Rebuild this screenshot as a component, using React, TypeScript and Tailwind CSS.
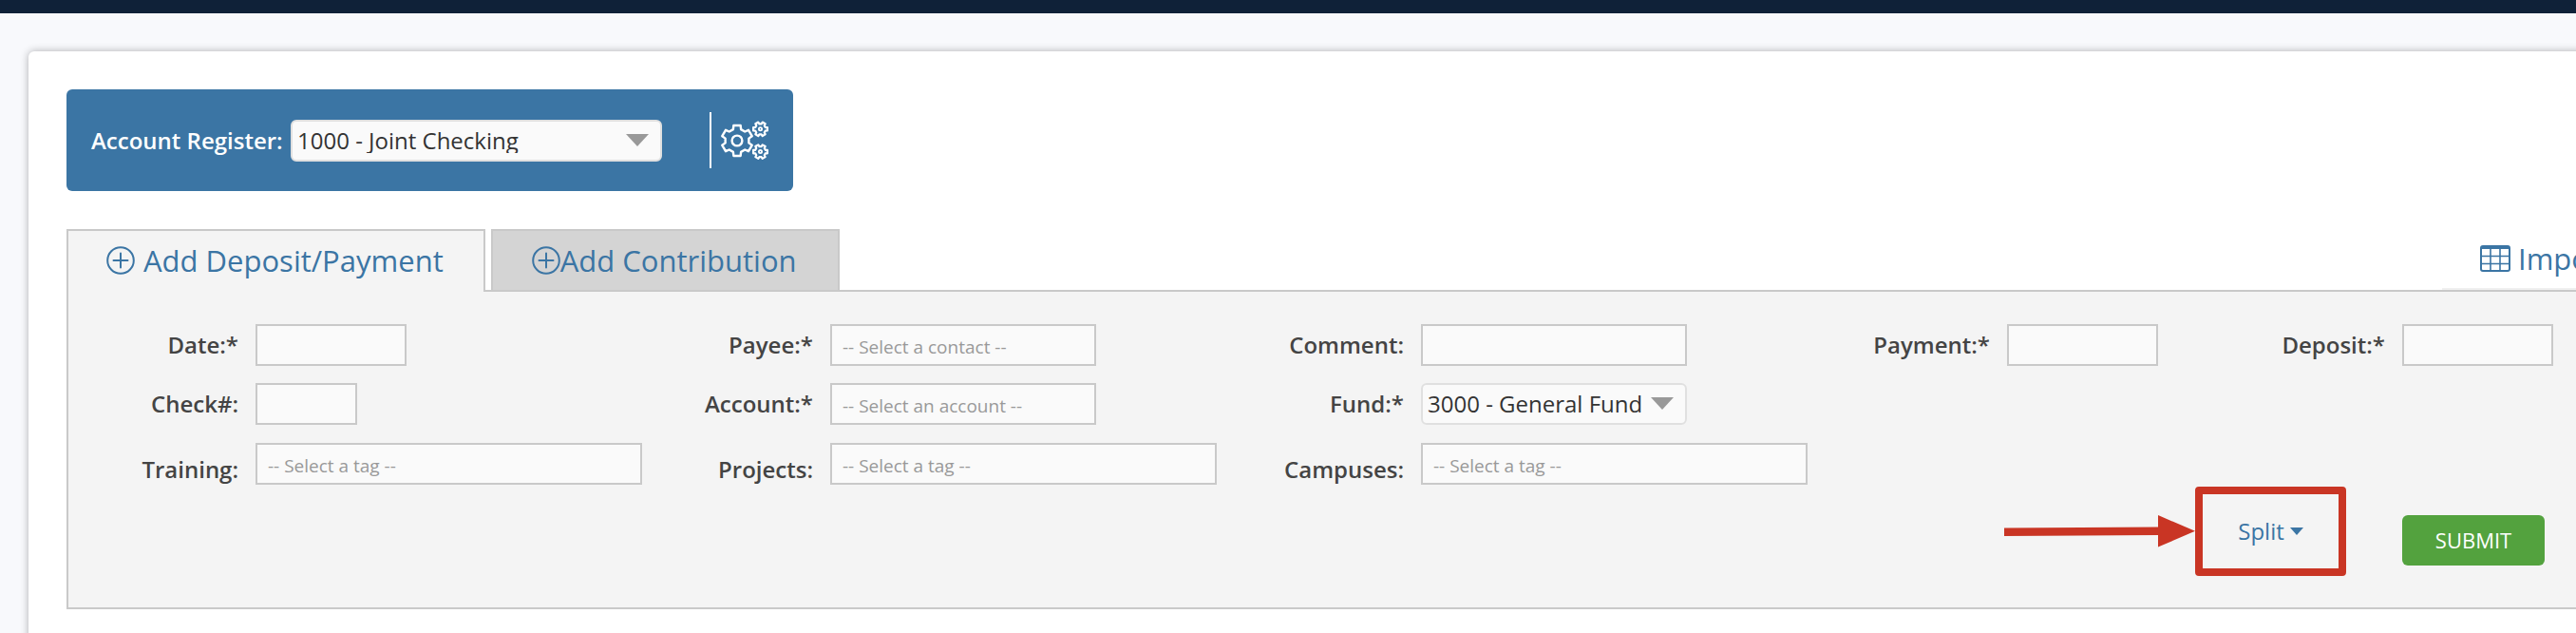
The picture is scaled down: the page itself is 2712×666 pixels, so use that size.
import { useId } from "react";
import type { ReactNode } from "react";

/** Closed outline of a six-toothed cog, with rounded joins left to the stroke. */
function cogPath(cx: number, cy: number, outer: number, root: number, start: number): string {
  const points: string[] = [];
  for (let i = 0; i < 6; i += 1) {
    const mid = start + i * 60;
    const corners: [number, number][] = [
      [-19, root],
      [-13, outer],
      [13, outer],
      [19, root],
    ];
    for (const [offset, radius] of corners) {
      const a = ((mid + offset) * Math.PI) / 180;
      points.push(`${(cx + radius * Math.cos(a)).toFixed(2)} ${(cy + radius * Math.sin(a)).toFixed(2)}`);
    }
  }
  return `M${points.join("L")}Z`;
}

function CogsIcon() {
  return (
    <svg width="52" height="42" viewBox="0 0 52 42" fill="none" stroke="currentColor" strokeWidth="2.4" strokeLinejoin="round" aria-hidden="true">
      <path d={cogPath(18, 21, 16.4, 12.6, -90)} />
      <circle cx="18" cy="21" r="5.4" />
      <path d={cogPath(42.5, 8.8, 7.6, 5.6, 0)} strokeWidth="2.2" />
      <circle cx="42.5" cy="8.8" r="1.6" strokeWidth="1.8" />
      <path d={cogPath(42.5, 32.6, 7.6, 5.6, 0)} strokeWidth="2.2" />
      <circle cx="42.5" cy="32.6" r="1.6" strokeWidth="1.8" />
    </svg>
  );
}

function PlusCircleIcon() {
  return (
    <svg width="30" height="30" viewBox="0 0 30 30" fill="none" stroke="currentColor" strokeWidth="2" className="shrink-0" aria-hidden="true">
      <circle cx="15" cy="15" r="13.8" />
      <path d="M15 7.5v15M7.5 15h15" strokeLinecap="round" />
    </svg>
  );
}

function TableIcon() {
  return (
    <svg width="32" height="28" viewBox="0 0 32 28" fill="none" stroke="currentColor" className="shrink-0" aria-hidden="true">
      <rect x="1" y="1" width="30" height="26" rx="2" strokeWidth="2" />
      <path d="M1 2.5h30" strokeWidth="3" />
      <path d="M11 3v24M21 3v24M1 11.5h30M1 19.5h30" strokeWidth="1.6" />
    </svg>
  );
}

function ArrowRight() {
  return (
    <svg width="201" height="34" viewBox="0 0 201 34" className="shrink-0 fill-[#c93524]" aria-hidden="true">
      <path d="M0 13.5L162 12.5V0L201 16.8L162 33.5V21L0 22Z" />
    </svg>
  );
}

const control = "h-11 border-2 border-[#c9c9c9] bg-[#fafafa] px-[11px] pt-1 text-[19px] text-[#333] placeholder:text-[#999] outline-none";

type FieldProps = {
  label: string;
  placeholder?: string;
  size: "xs" | "sm" | "md" | "lg";
  low?: boolean;
};

const widths = {
  xs: "w-[107px]",
  sm: "w-[159px]",
  md: "w-[280px]",
  lg: "w-[407px]",
};

const labelBase = "w-[179px] shrink-0 text-right text-2xl leading-11 font-semibold text-[#444]";

function Field({ label, placeholder, size, low }: FieldProps) {
  const id = useId();
  return (
    <div className="flex h-11 gap-[18px]">
      <label htmlFor={id} className={low ? `${labelBase} pt-1.5` : labelBase}>
        {label}
      </label>
      <input id={id} type="text" placeholder={placeholder} className={`${control} ${widths[size]}`} />
    </div>
  );
}

function SelectBox({ id, value, className }: { id: string; value: string; className: string }) {
  return (
    <div className={`relative ${className}`}>
      <select id={id} className="block h-11 w-full appearance-none rounded-md border-2 border-[#e0e0e0] bg-[#fafafa] pt-1 pr-10 pb-[7px] pl-[5px] text-2xl text-[#333] outline-none">
        <option>{value}</option>
      </select>
      <svg width="24" height="13" viewBox="0 0 24 13" className="pointer-events-none absolute top-[15px] right-3.5 fill-[#999]" aria-hidden="true">
        <path d="M0 0h24L12 13z" />
      </svg>
    </div>
  );
}

function Tab({ active, children }: { active?: boolean; children: ReactNode }) {
  return (
    <button
      type="button"
      role="tab"
      aria-selected={!!active}
      className={
        active
          ? "-mb-0.5 flex items-center gap-[9px] border-2 border-b-0 border-[#c9c9c9] bg-[#f4f4f4] pr-[42px] pl-10 pb-0.5"
          : "flex items-center border-2 border-b-0 border-[#c9c9c9] bg-[#d4d4d4] pr-[43px] pl-[41px]"
      }
    >
      <PlusCircleIcon />
      {children}
    </button>
  );
}

export default function App() {
  return (
    <div className="min-h-screen overflow-hidden bg-[#f8f9fc] font-['Open_Sans',sans-serif]">
      <header className="h-3.5 bg-[#0f2138]" />
      <main className="mt-10 -mr-4 ml-[30px] min-h-[640px] rounded-tl-md bg-white pt-10 pr-4 pl-10 shadow-[0_0_8px_rgba(0,0,0,0.3)]">
        <section className="flex h-[107px] w-[765px] items-center rounded-md bg-[#3b75a4] pl-[26px] text-white">
          <label htmlFor="register" className="w-[210px] text-2xl font-semibold whitespace-nowrap">
            Account Register:
          </label>
          <SelectBox id="register" value="1000 - Joint Checking" className="w-[391px]" />
          <button type="button" aria-label="Register settings" className="ml-[50px] flex h-[59px] items-center border-l-2 border-white pl-[9px]">
            <CogsIcon />
          </button>
        </section>

        <nav role="tablist" className="mt-10 flex h-[66px] gap-1.5 border-b-2 border-[#c9c9c9] text-[31px] text-[#3b75a4]">
          <Tab active>Add Deposit/Payment</Tab>
          <Tab>Add Contribution</Tab>
          <div className="ml-auto flex w-[141px] items-center border-b-2 border-[#f0f0f0] pl-10">
            <a href="#import" className="flex items-center gap-2 whitespace-nowrap">
              <TableIcon />
              Import
            </a>
          </div>
        </nav>

        <form className="border-b-2 border-l-2 border-[#c9c9c9] bg-[#f4f4f4] pt-[34px] pb-[33px]" onSubmit={(e) => e.preventDefault()}>
          <div className="grid grid-cols-[605fr_622fr_617fr_416fr_380fr] gap-y-[18px]">
            <Field label="Date:*" size="sm" />
            <Field label="Payee:*" placeholder="-- Select a contact --" size="md" />
            <Field label="Comment:" size="md" />
            <Field label="Payment:*" size="sm" />
            <Field label="Deposit:*" size="sm" />

            <Field label="Check#:" size="xs" />
            <Field label="Account:*" placeholder="-- Select an account --" size="md" />
            <div className="col-span-3 flex h-11 gap-[18px]">
              <label htmlFor="fund" className={labelBase}>
                Fund:*
              </label>
              <SelectBox id="fund" value="3000 - General Fund" className="w-[280px]" />
            </div>
          </div>
          <div className="mt-[19px] grid grid-cols-[605fr_622fr_617fr_796fr]">
            <Field label="Training:" placeholder="-- Select a tag --" size="lg" low />
            <Field label="Projects:" placeholder="-- Select a tag --" size="lg" low />
            <Field label="Campuses:" placeholder="-- Select a tag --" size="lg" low />
          </div>

          <div className="mt-0.5 flex items-center justify-end pr-[33px]">
            <ArrowRight />
            <div className="flex h-[94px] w-[159px] items-center justify-center rounded-sm border-8 border-[#c93524]">
              <button type="button" className="flex items-center gap-1.5 text-2xl text-[#3b75a4]">
                Split
                <svg width="14" height="8" viewBox="0 0 14 8" fill="currentColor" aria-hidden="true">
                  <path d="M0 0h14L7 8z" />
                </svg>
              </button>
            </div>
            <button type="submit" className="mt-[18px] ml-[59px] h-[53px] w-[150px] rounded-md bg-[#53a23e] text-[22px] text-white">
              SUBMIT
            </button>
          </div>
        </form>
      </main>
    </div>
  );
}
